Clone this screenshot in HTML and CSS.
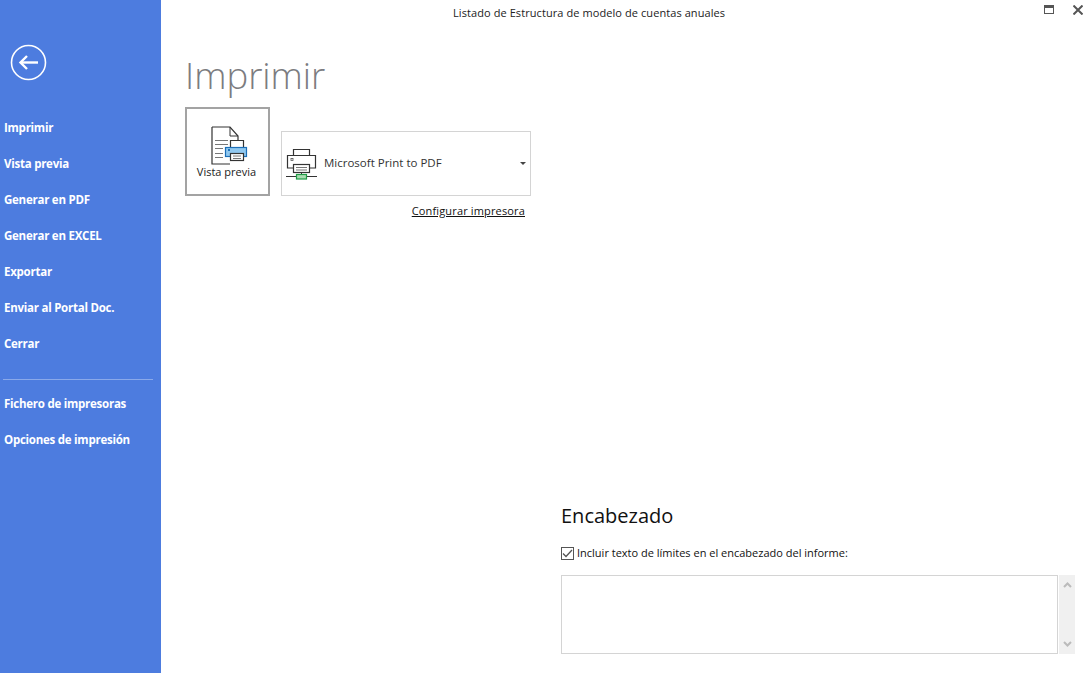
FILE: index.html
```html
<!DOCTYPE html>
<html lang="es">
<head>
<meta charset="UTF-8">
<title>Listado de Estructura de modelo de cuentas anuales</title>
<link rel="stylesheet" href="styles.css">
</head>
<body>

<aside class="sidebar">
    <div class="back">
        <svg width="37" height="37" viewBox="0 0 37 37" fill="none" stroke="#fff">
            <circle cx="18.5" cy="18.5" r="17" stroke-width="1.6"/>
            <path d="M11 18.5H28" stroke-width="2.4"/>
            <path d="M17 12L10.5 18.5L17 25" stroke-width="2.4"/>
        </svg>
    </div>
    <nav class="menu">
        <a>Imprimir</a>
        <a>Vista previa</a>
        <a>Generar en PDF</a>
        <a>Generar en EXCEL</a>
        <a>Exportar</a>
        <a>Enviar al Portal Doc.</a>
        <a>Cerrar</a>
    </nav>
    <div class="divider"></div>
    <nav class="menu">
        <a>Fichero de impresoras</a>
        <a>Opciones de impresión</a>
    </nav>
</aside>

<main class="main">
    <header class="titlebar">
        <div class="window-title">Listado de Estructura de modelo de cuentas anuales</div>
        <div class="window-buttons">
            <svg width="10" height="9" viewBox="0 0 10 9" fill="none">
                <rect x="0.5" y="0.5" width="9" height="8" stroke="#555"/>
                <rect x="0" y="0" width="10" height="3" fill="#555"/>
            </svg>
            <svg width="10" height="10" viewBox="0 0 10 10" fill="none" stroke="#555" stroke-width="2">
                <path d="M0.5 0.5L9.5 9.5M9.5 0.5L0.5 9.5"/>
            </svg>
        </div>
    </header>

    <h1>Imprimir</h1>

    <div class="print-row">
        <button class="preview-btn">
            <svg width="38" height="40" viewBox="0 0 38 40" fill="none">
                <path d="M1 1H19L27 10V14M1 1V38H19" stroke="#333" stroke-width="1.2"/>
                <path d="M19 1V10H27" stroke="#333"/>
                <path d="M4 14.5H17M4 18.5H17M4 22.5H12M4 27.5H12M4 31.5H12" stroke="#777"/>
                <path d="M19.5 21V14.5H32.5V21" fill="#fff" stroke="#333" stroke-width="1.2"/>
                <rect x="14.5" y="21.5" width="21" height="9" fill="#90c8f0" stroke="#1c6fb8" stroke-width="1.2"/>
                <rect x="17" y="23" width="2" height="2" fill="#1c6fb8"/>
                <rect x="19.5" y="27.5" width="13" height="7" fill="#fff" stroke="#333" stroke-width="1.2"/>
                <path d="M22 30H30M22 32.5H30" stroke="#777"/>
            </svg>
            <span>Vista previa</span>
        </button>
        <div class="printer-col">
            <div class="printer-select">
                <svg width="31" height="34" viewBox="0 0 31 34" fill="none">
                    <path d="M7.5 8V2.5H23.5V8" stroke="#333" stroke-width="1.2"/>
                    <path d="M7 21H1.5V8.5H29.5V21H24" fill="#fff" stroke="#333" stroke-width="1.2"/>
                    <rect x="5" y="11.5" width="2" height="2" stroke="#555" stroke-width="0.8"/>
                    <rect x="7.5" y="17.5" width="16" height="8" fill="#fff" stroke="#333" stroke-width="1.2"/>
                    <path d="M10 20.5H21M10 23H21" stroke="#777"/>
                    <path d="M0 29.5H31" stroke="#333"/>
                    <path d="M15.5 25.5V27" stroke="#333"/>
                    <rect x="10.5" y="27.5" width="10" height="4.5" fill="#a8dcb0" stroke="#1f9a45" stroke-width="1.2"/>
                </svg>
                <span class="printer-name">Microsoft Print to PDF</span>
                <span class="caret"></span>
            </div>
            <a class="config-link">Configurar impresora</a>
        </div>
    </div>

    <section class="header-section">
        <h2>Encabezado</h2>
        <label class="check-row">
            <span class="checkbox">
                <svg width="13" height="13" viewBox="0 0 13 13" fill="none" stroke="#555" stroke-width="1.3">
                    <path d="M2 6.5L5 9.5L11 3"/>
                </svg>
            </span>
            Incluir texto de límites en el encabezado del informe:
        </label>
        <div class="text-row">
            <div class="text-box"></div>
            <div class="scrollbar">
                <svg width="9" height="6" viewBox="0 0 9 6" fill="none" stroke="#bbb" stroke-width="2"><path d="M1 5L4.5 1.5L8 5"/></svg>
                <svg width="9" height="6" viewBox="0 0 9 6" fill="none" stroke="#bbb" stroke-width="2"><path d="M1 1L4.5 4.5L8 1"/></svg>
            </div>
        </div>
    </section>
</main>

</body>
</html>
```

FILE: styles.css
```css
* {
    box-sizing: border-box;
}
html, body {
    height: 100%;
}
body {
    margin: 0;
    display: flex;
    height: 673px;
    overflow: hidden;
    background: #fff;
    color: #222;
    font-family: "Open Sans", "Noto Sans", sans-serif;
    font-size: 11px;
}

/* Left blue panel */
.sidebar {
    width: 161px;
    flex-shrink: 0;
    background: #4d7cdf;
    color: #fff;
    padding-top: 44px;
}
.back {
    height: 37px;
    padding-left: 10px;
    margin-bottom: 29px;
}
.menu {
    display: flex;
    flex-direction: column;
}
.menu a {
    height: 36px;
    line-height: 36px;
    padding-left: 4px;
    font-size: 11.5px;
    font-weight: 700;
    letter-spacing: -0.25px;
}
.divider {
    height: 1px;
    margin: 17px 8px 6px 3px;
    background: #8aa9ea;
}

/* Right side */
.main {
    flex: 1;
    display: flex;
    flex-direction: column;
    padding-left: 24px;
}
.titlebar {
    display: flex;
    justify-content: space-between;
    height: 24px;
    padding-top: 5px;
}
.window-title {
    margin-left: 268px;
    color: #222;
    line-height: 16px;
    letter-spacing: 0.08px;
}
.window-buttons {
    display: flex;
    gap: 19px;
    padding-right: 9px;
    align-items: flex-start;
}
h1 {
    margin: 23px 0 0;
    font-size: 36.5px;
    font-weight: 300;
    line-height: 56px;
    height: 60px;
    color: #7c7c80;
}
.print-row {
    display: flex;
    gap: 11px;
}
.preview-btn {
    width: 85px;
    height: 89px;
    padding: 17px 0 0;
    border: 2px solid #a3a3a3;
    background: #fff;
    display: flex;
    flex-direction: column;
    align-items: center;
    font: inherit;
    color: #222;
}
.preview-btn svg {
    display: block;
    margin-left: 5px;
}
.preview-btn span {
    line-height: 16px;
    margin: -2px 2px 0 0;
}
.printer-col {
    margin-top: 24px;
    display: flex;
    flex-direction: column;
    align-items: flex-end;
    width: 250px;
}
.printer-select {
    width: 250px;
    height: 65px;
    border: 1px solid #d4d4d4;
    display: flex;
    align-items: center;
    padding: 0 4px;
    gap: 7px;
}
.printer-name {
    flex: 1;
    font-size: 11.5px;
    color: #333;
    padding-bottom: 2px;
}
.caret {
    width: 0;
    height: 0;
    border-left: 3px solid transparent;
    border-right: 3px solid transparent;
    border-top: 3px solid #444;
}
.config-link {
    margin-top: 7px;
    margin-right: 6px;
    color: #111;
    text-decoration: underline;
    line-height: 16px;
    letter-spacing: 0.15px;
}

/* Encabezado block */
.header-section {
    margin: 283px 0 0 376px;
}
h2 {
    margin: 0;
    font-size: 20px;
    font-weight: 400;
    line-height: 28px;
    color: #111;
}
.check-row {
    display: flex;
    align-items: center;
    gap: 3px;
    margin-top: 15px;
    color: #111;
    line-height: 16px;
}
.checkbox {
    width: 13px;
    height: 13px;
    border: 1px solid #555;
    display: flex;
}
.checkbox svg {
    margin: -1px;
}
.text-row {
    display: flex;
    margin-top: 14px;
    gap: 1px;
}
.text-box {
    width: 497px;
    height: 79px;
    border: 1px solid #d4d4d4;
}
.scrollbar {
    width: 16px;
    height: 79px;
    background: #f0f0f0;
    display: flex;
    flex-direction: column;
    justify-content: space-between;
    align-items: center;
    padding: 7px 0;
}
```
